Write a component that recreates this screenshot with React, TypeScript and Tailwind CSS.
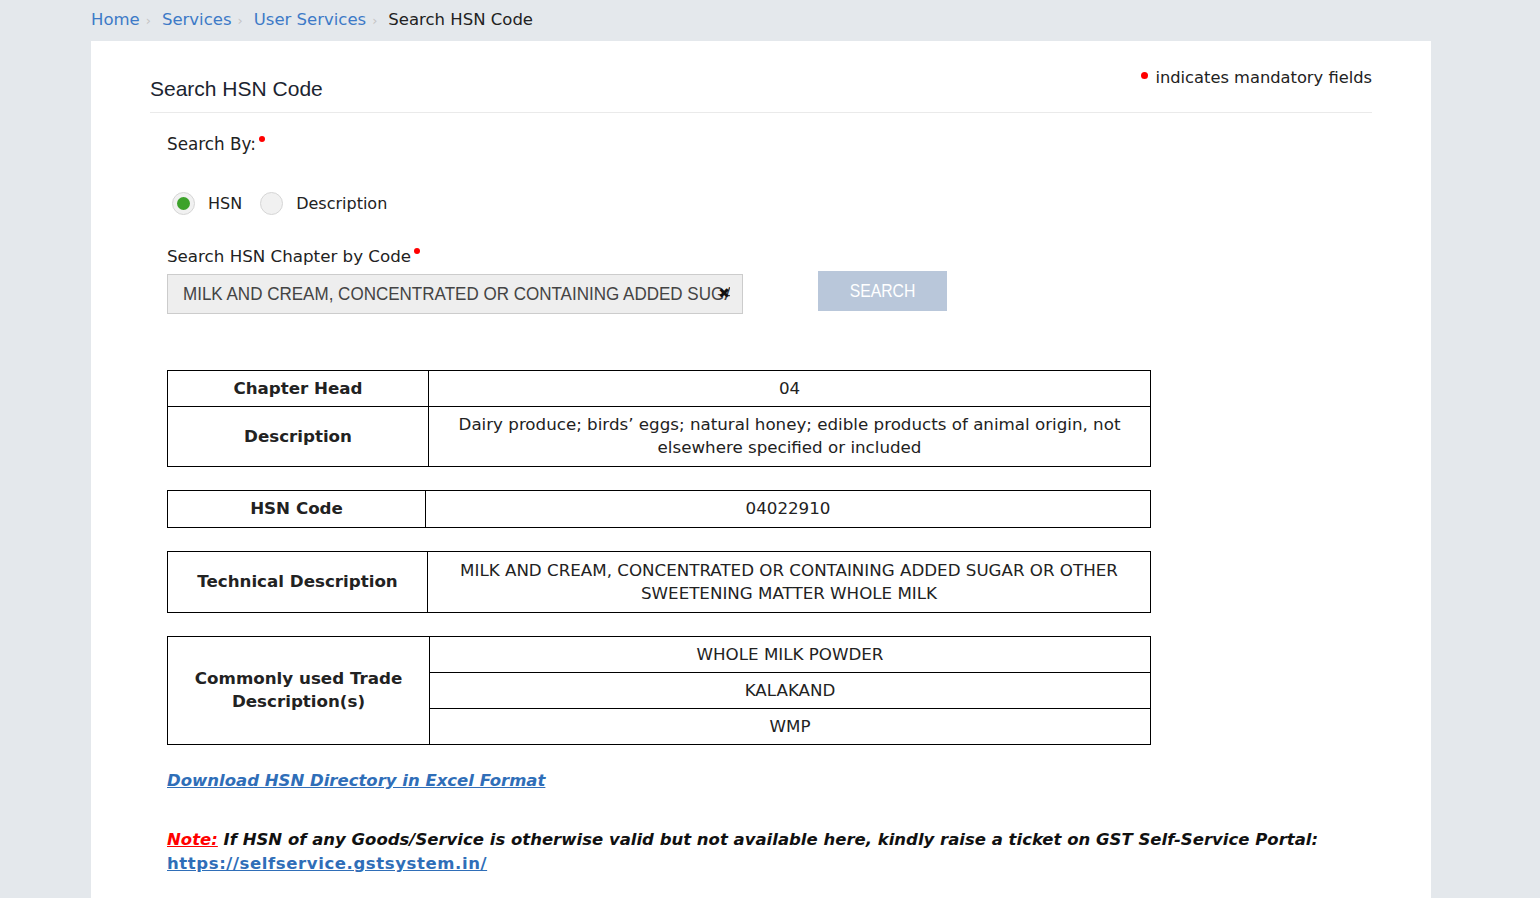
import React from "react"

const crumbs = ["Home", "Services", "User Services"]

const tradeDescs = ["WHOLE MILK POWDER", "KALAKAND", "WMP"]

function Radio({ checked, label }: { checked?: boolean; label: string }) {
  return (
    <label className="flex items-center gap-[13px] mr-[18px]">
      <span className="w-[23px] h-[23px] rounded-full border border-[#d6d6d6] bg-[#f1f1f1] flex items-center justify-center">
        {checked && <span className="w-[13px] h-[13px] rounded-full bg-[#3da22b]" />}
      </span>
      <span>{label}</span>
    </label>
  )
}

function Req() {
  return <span className="inline-block w-[6px] h-[6px] rounded-full bg-[#ff0000] align-top mt-[4px] ml-[3px]" />
}

export default function App() {
  return (
    <div className="min-h-screen bg-[#e4e8ec] text-[#222] font-['DejaVu_Sans',Verdana,sans-serif] text-[15px]">
      {/* breadcrumb */}
      <div className="h-[41px] flex items-center pl-[91px] text-[16.5px]">
        {crumbs.map((c) => (
          <span key={c} className="flex items-center">
            <a className="text-[#3d7ac7]">{c}</a>
            <span className="text-[#c4c4c4] text-[13px] ml-[6px] mr-[11px]">›</span>
          </span>
        ))}
        <span className="text-[#222]">Search HSN Code</span>
      </div>

      <div className="ml-[91px] mr-[109px] bg-white px-[59px] pt-[21px] pb-[30px]">
        <div className="flex justify-between border-b border-[#eaeaea] pb-[7px]">
          <h1 className="text-[21px] font-['Liberation_Sans',Arial,sans-serif] text-[#1b2430] mt-[11px]">Search HSN Code</h1>
          <div className="text-[16.3px] flex items-start mt-[4px]">
            <span className="inline-block w-[7px] h-[7px] rounded-full bg-[#ff0000] mt-[6px] mr-[7px]" />
            indicates mandatory fields
          </div>
        </div>

        <div className="pl-[17px]">
          <div className="mt-[19px] text-[16.8px] flex items-start">
            Search By:<Req />
          </div>

          <div className="flex items-center mt-[35px] ml-[5px] text-[16px]">
            <Radio checked label="HSN" />
            <Radio label="Description" />
          </div>

          <div className="mt-[28px] text-[16.7px] flex items-start">
            Search HSN Chapter by Code<Req />
          </div>

          <div className="flex items-start mt-[5px]">
            <div className="relative w-[576px] h-[40px] bg-[#eeeeee] border border-[#cccccc] flex items-center pl-[15px]">
              <div className="flex-1 mr-[12px] overflow-hidden">
                <span className="block whitespace-nowrap origin-left scale-x-[0.92] font-['Liberation_Sans',Arial,sans-serif] text-[18.5px] text-[#444]">
                  MILK AND CREAM, CONCENTRATED OR CONTAINING ADDED SUGAR OR OTHER SWEETENING MATTER WHOLE MILK
                </span>
              </div>
              <span className="absolute right-[12px] top-[11px] text-[14px] leading-none text-[#111]">✖</span>
            </div>
            <button className="ml-[75px] -mt-[3px] w-[129px] h-[40px] bg-[#b9c7da] text-white">
              <span className="inline-block scale-x-[0.9] font-['Liberation_Sans',Arial,sans-serif] text-[17.5px]">SEARCH</span>
            </button>
          </div>

          <div className="w-[984px] mt-[56px] flex flex-col gap-[23px] text-[16.7px] text-[#222]">
            <table className="w-full border-collapse border border-black text-center">
              <tbody>
                <tr className="h-[36px]">
                  <td className="w-[261px] border border-black font-bold">Chapter Head</td>
                  <td className="border border-black">04</td>
                </tr>
                <tr className="h-[60px]">
                  <td className="border border-black font-bold">Description</td>
                  <td className="border border-black px-[20px] leading-[23px]">
                    Dairy produce; birds’ eggs; natural honey; edible products of animal origin, not elsewhere specified or included
                  </td>
                </tr>
              </tbody>
            </table>

            <table className="w-full border-collapse border border-black text-center">
              <tbody>
                <tr className="h-[37px]">
                  <td className="w-[258px] border border-black font-bold">HSN Code</td>
                  <td className="border border-black">04022910</td>
                </tr>
              </tbody>
            </table>

            <table className="w-full border-collapse border border-black text-center">
              <tbody>
                <tr className="h-[61px]">
                  <td className="w-[260px] border border-black font-bold">Technical Description</td>
                  <td className="border border-black px-[20px] leading-[23px]">
                    MILK AND CREAM, CONCENTRATED OR CONTAINING ADDED SUGAR OR OTHER SWEETENING MATTER WHOLE MILK
                  </td>
                </tr>
              </tbody>
            </table>

            <table className="w-full border-collapse border border-black text-center">
              <tbody>
                {tradeDescs.map((t, i) => (
                  <tr key={t} className="h-[36px]">
                    {i === 0 && (
                      <td rowSpan={3} className="w-[262px] border border-black font-bold leading-[23px] px-[16px]">
                        Commonly used Trade Description(s)
                      </td>
                    )}
                    <td className="border border-black">{t}</td>
                  </tr>
                ))}
              </tbody>
            </table>
          </div>

          <a className="inline-block mt-[24px] text-[#2f6eb8] font-bold italic underline text-[16.5px]">
            Download HSN Directory in Excel Format
          </a>

          <p className="mt-[35px] font-bold italic text-[16.5px] leading-[24px] text-[#111]">
            <span className="text-[#ff0000] underline">Note:</span> If HSN of any Goods/Service is otherwise valid but not available here, kindly raise a ticket on GST Self-Service Portal:
            <br />
            <a className="text-[#2f6eb8] underline not-italic tracking-[0.6px]">https://selfservice.gstsystem.in/</a>
          </p>
        </div>
      </div>
    </div>
  )
}
